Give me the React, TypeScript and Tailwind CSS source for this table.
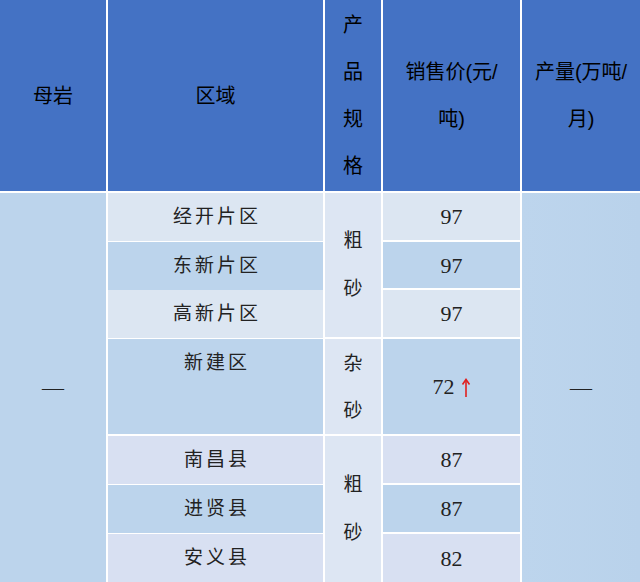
const head = "font-['Liberation_Sans','Noto_Sans_CJK_SC',sans-serif] text-[20px] text-black";
const body = "font-['Liberation_Serif','Noto_Sans_CJK_SC',serif] text-[#222]";

const LIGHT = "bg-[#dce6f2]";
const DARK = "bg-[#bcd4ec]";
const LAV = "bg-[#d8e0f2]";

function Region({ name, bg, top }: { name: string; bg: string; top?: boolean }) {
  return (
    <div
      className={`${bg} ${body} flex justify-center text-[19px] tracking-[3px] pl-[3px] leading-[48px] ${
        top ? "items-start" : "items-center"
      }`}
    >
      {name}
    </div>
  );
}

function Price({ value, bg, up }: { value: string; bg: string; up?: boolean }) {
  return (
    <div className={`${bg} ${body} flex items-center justify-center gap-[6px] text-[22px]`}>
      <span>{value}</span>
      {up && (
        <svg width="10" height="20" viewBox="0 0 10 20" className="mt-[2px]">
          <path d="M5 19V2" stroke="#e02020" strokeWidth="1.6" fill="none" />
          <path d="M1.5 6.5L5 1.5L8.5 6.5" stroke="#e02020" strokeWidth="1.6" fill="none" />
        </svg>
      )}
    </div>
  );
}

function Vert({ chars, className }: { chars: string[]; className: string }) {
  return (
    <div className={`flex flex-col items-center justify-center leading-[47px] ${className}`}>
      {chars.map((c) => (
        <span key={c}>{c}</span>
      ))}
    </div>
  );
}

export default function App() {
  return (
    <div className="w-[640px] h-[582px] bg-white overflow-hidden">
      <div className="grid grid-cols-[106px_215px_56px_137px_118px] grid-rows-[191px_47px_46px_47px_95px_47px_47px_48px] gap-[2px]">
        {/* header */}
        <div className={`bg-[#4472c4] ${head} flex items-center justify-center`}>母岩</div>
        <div className={`bg-[#4472c4] ${head} flex items-center justify-center`}>区域</div>
        <Vert chars={["产", "品", "规", "格"]} className={`bg-[#4472c4] ${head}`} />
        <div className={`bg-[#4472c4] ${head} flex flex-col items-center justify-center leading-[47px]`}>
          <span>销售价(元/</span>
          <span>吨)</span>
        </div>
        <div className={`bg-[#4472c4] ${head} flex flex-col items-center justify-center leading-[47px]`}>
          <span>产量(万吨/</span>
          <span>月)</span>
        </div>

        {/* 母岩 merged */}
        <div className={`row-start-2 row-end-9 col-start-1 ${DARK} ${body} flex items-center justify-center text-[22px]`}>
          —
        </div>

        {/* rows */}
        <div className="row-start-2 col-start-2 grid"><Region name="经开片区" bg={LIGHT} /></div>
        <div className="row-start-3 col-start-2 grid"><Region name="东新片区" bg={DARK} /></div>
        <div className="row-start-4 col-start-2 grid"><Region name="高新片区" bg={LIGHT} /></div>
        <div className="row-start-5 col-start-2 grid"><Region name="新建区" bg={DARK} top /></div>
        <div className="row-start-6 col-start-2 grid"><Region name="南昌县" bg={LAV} /></div>
        <div className="row-start-7 col-start-2 grid"><Region name="进贤县" bg={DARK} /></div>
        <div className="row-start-8 col-start-2 grid"><Region name="安义县" bg={LAV} /></div>

        {/* 产品规格 */}
        <Vert
          chars={["粗", "砂"]}
          className={`row-start-2 row-end-5 col-start-3 bg-[#dde6f3] ${body} text-[19px] leading-[48px]`}
        />
        <Vert
          chars={["杂", "砂"]}
          className={`row-start-5 col-start-3 bg-[#dde6f3] ${body} text-[19px] leading-[47px]`}
        />
        <Vert
          chars={["粗", "砂"]}
          className={`row-start-6 row-end-9 col-start-3 bg-[#dde6f3] ${body} text-[19px] leading-[48px]`}
        />

        {/* 销售价 */}
        <div className="row-start-2 col-start-4 grid"><Price value="97" bg={LIGHT} /></div>
        <div className="row-start-3 col-start-4 grid"><Price value="97" bg={DARK} /></div>
        <div className="row-start-4 col-start-4 grid"><Price value="97" bg={LIGHT} /></div>
        <div className="row-start-5 col-start-4 grid"><Price value="72" bg={DARK} up /></div>
        <div className="row-start-6 col-start-4 grid"><Price value="87" bg={LAV} /></div>
        <div className="row-start-7 col-start-4 grid"><Price value="87" bg={DARK} /></div>
        <div className="row-start-8 col-start-4 grid"><Price value="82" bg={LAV} /></div>

        {/* 产量 merged */}
        <div className={`row-start-2 row-end-9 col-start-5 bg-gradient-to-r from-[#bdd5ed] to-[#b9d2eb] ${body} flex items-center justify-center text-[22px]`}>
          —
        </div>
      </div>
    </div>
  );
}
